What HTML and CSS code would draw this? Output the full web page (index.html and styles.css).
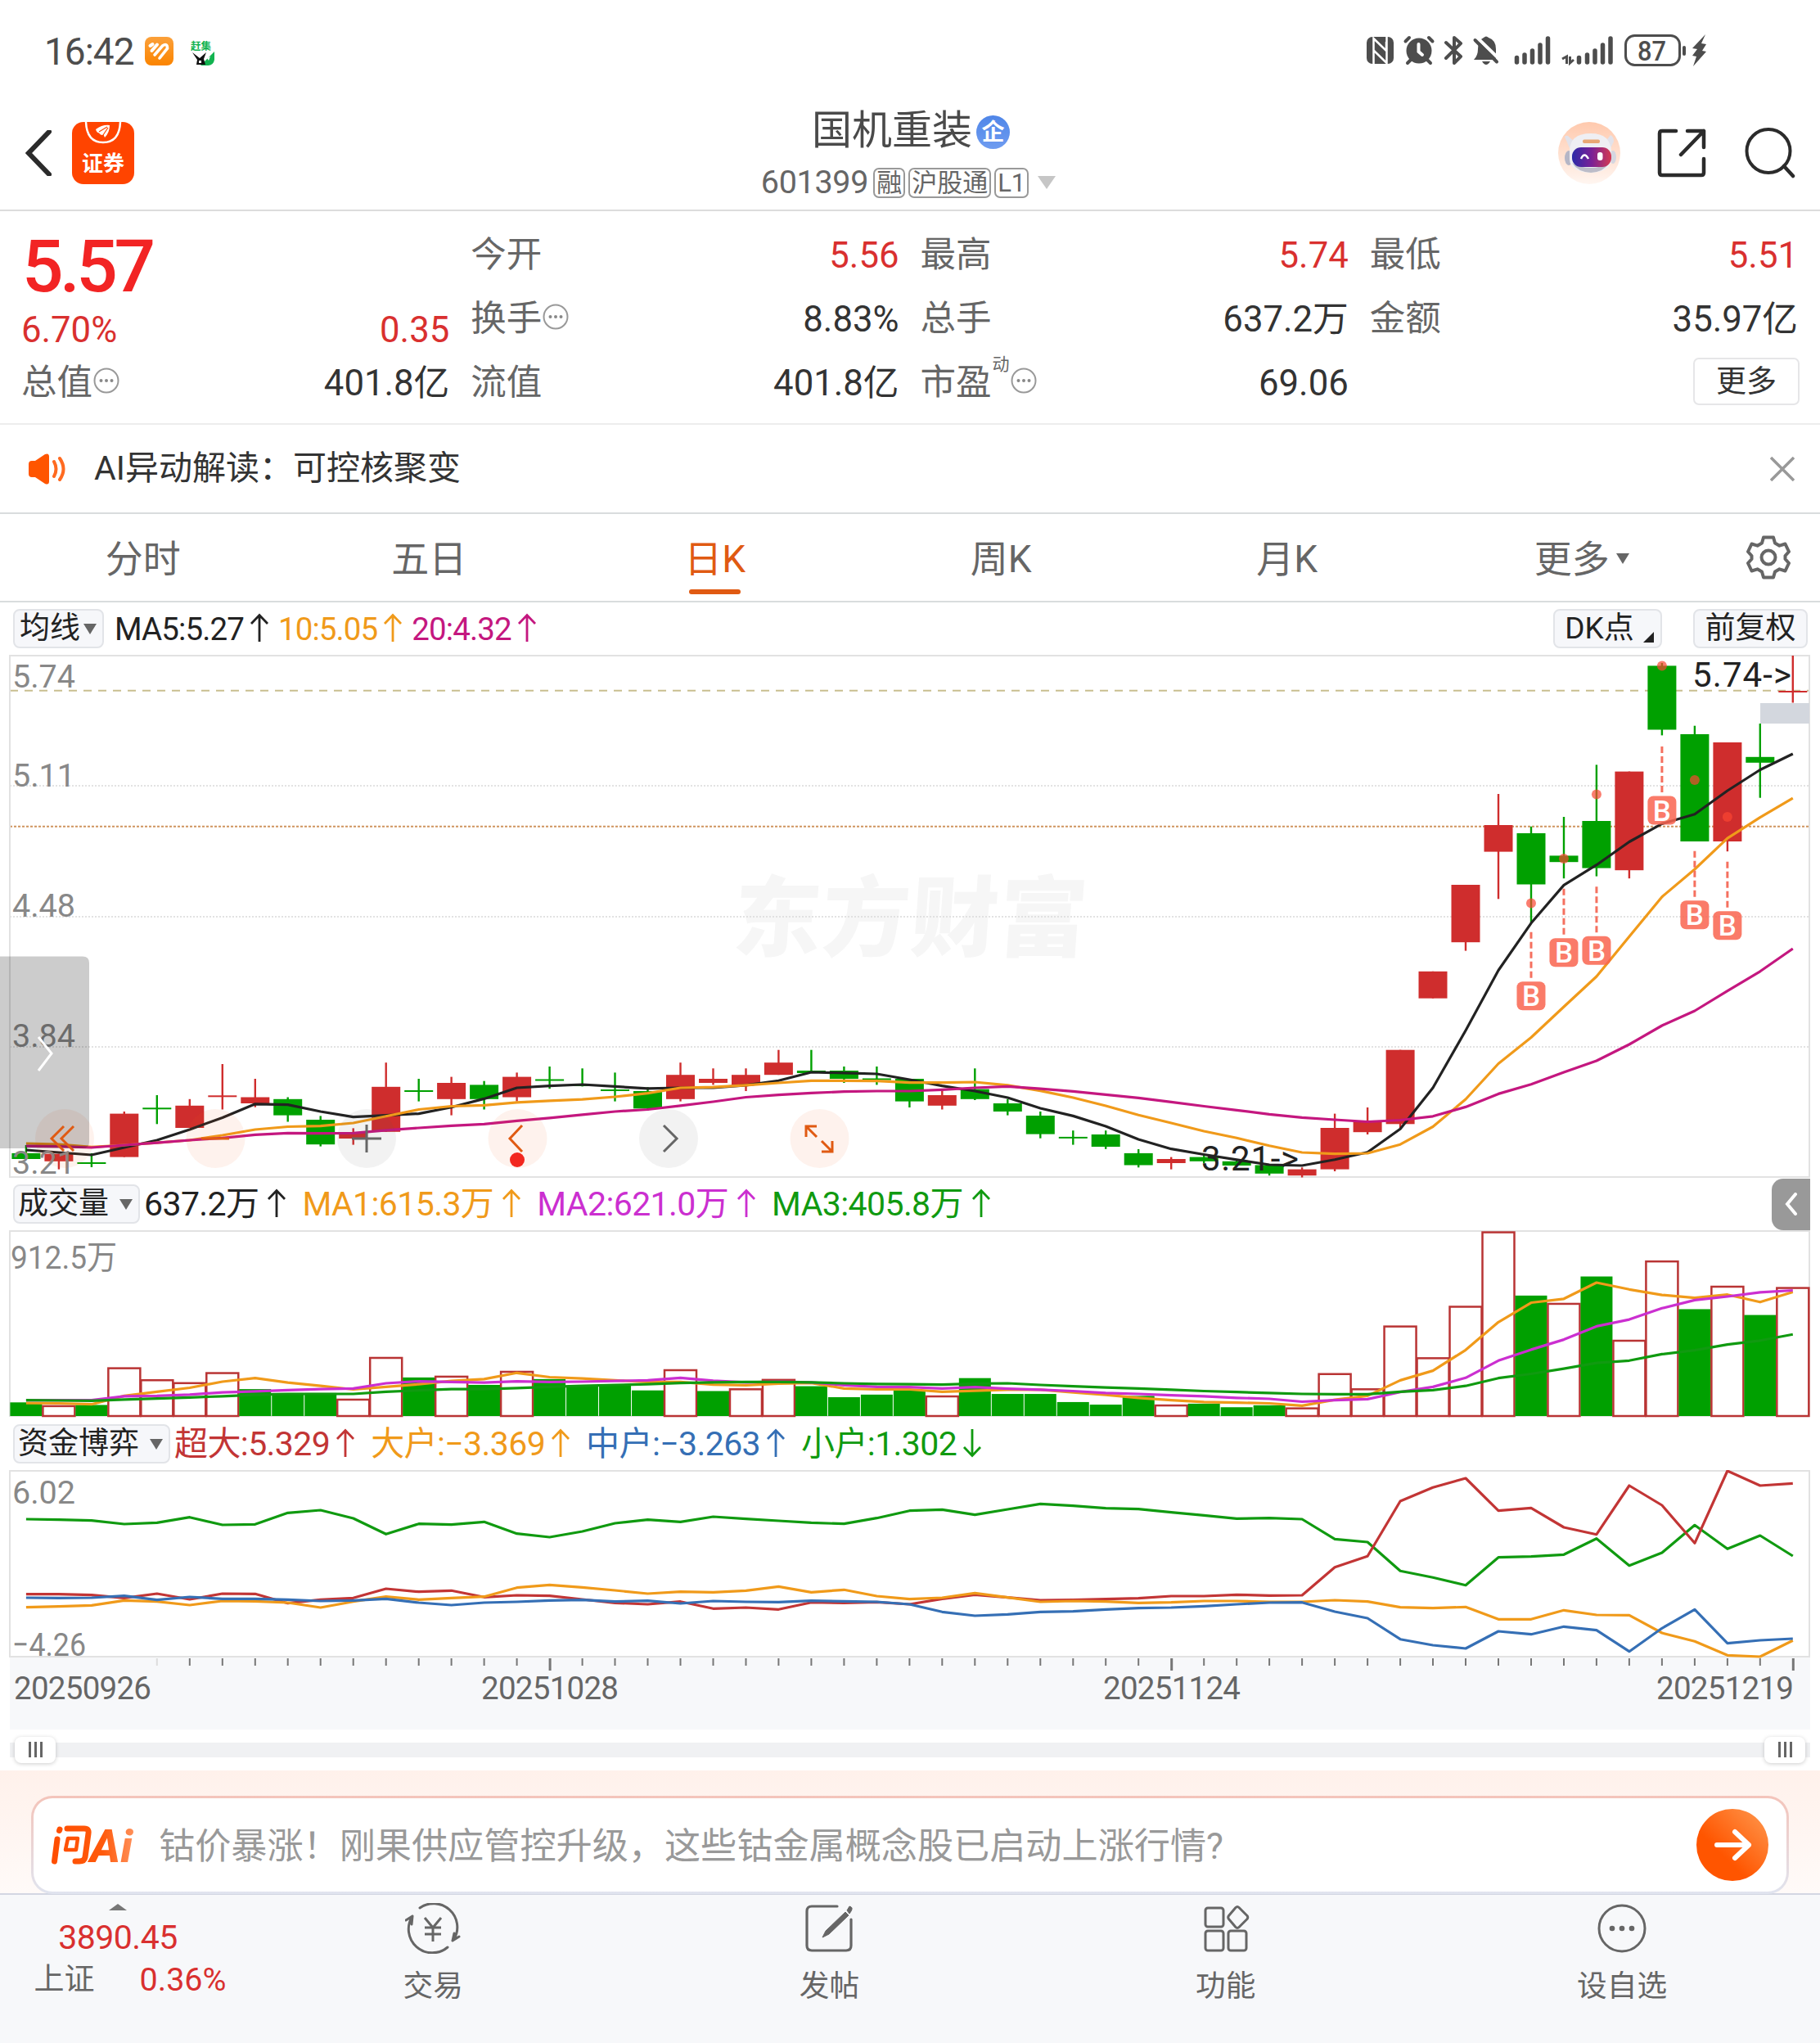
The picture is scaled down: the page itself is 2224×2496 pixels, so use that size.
FILE: index.html
```html
<!DOCTYPE html>
<html lang="zh-CN">
<head>
<meta charset="utf-8">
<title>国机重装 601399</title>
<link rel="stylesheet" href="styles.css">
</head>
<body>
<svg class="defs" width="0" height="0">
  <symbol id="up" viewBox="0 0 24 36"><path d="M12 35V3M2 13L12 2.500L22 13" fill="none" stroke="currentColor" stroke-width="2.800"/></symbol>
  <symbol id="down" viewBox="0 0 24 36"><path d="M12 1V33M2 23L12 33.500L22 23" fill="none" stroke="currentColor" stroke-width="2.800"/></symbol>
  <symbol id="info" viewBox="0 0 32 32"><circle cx="16" cy="16" r="14.500" fill="none" stroke="#999" stroke-width="2"/><g fill="#888"><circle cx="9.500" cy="16" r="2"/><circle cx="16" cy="16" r="2"/><circle cx="22.500" cy="16" r="2"/></g></symbol>
</svg>

<div class="status">
  <div class="status-left">
    <span class="clock">16:42</span>
    <svg class="ic-app" viewBox="0 0 35 35"><defs><linearGradient id="og" x1="0" y1="0" x2="0" y2="1"><stop offset="0" stop-color="#fba03a"/><stop offset="1" stop-color="#fb8400"/></linearGradient></defs><rect width="35" height="35" rx="8" fill="url(#og)"/><g fill="none" stroke="#fff" stroke-linecap="round"><path d="M6.500 11L9.500 9M8.500 17L15 9.500" stroke-width="4"/><path d="M12 22L21.500 11Q27.500 7 27.500 14L18 26" stroke-width="3.600"/></g></svg>
    <svg class="ic-ganji" viewBox="0 0 30 31"><text x="0" y="11.500" font-size="12.500" font-weight="700" fill="#12b350">赶集</text><path d="M29 14V24Q28 31 20 31H12Z" fill="#12b350"/><path d="M2 15L11 22L19 15L16 23L18 30H7L8 24Z" fill="#111"/><path d="M10 25h3v3h-3zM20 22l4-2-2 5z" fill="#fff"/></svg>
  </div>
  <svg class="status-right" viewBox="1666 38 424 46">
    <g fill="#4d4d4d" stroke="none">
      <rect x="1670" y="45" width="33" height="33" rx="7"/>
      <path d="M1678.500 78V47L1694 62V51M1694.500 45V77L1679 62" fill="none" stroke="#fff" stroke-width="2.500"/>
      <path d="M1678.500 46L1694.500 77M1684 62V76" fill="none" stroke="#fff" stroke-width="0"/>
      <circle cx="1734" cy="62" r="15.500"/>
      <path d="M1733.500 54V63L1738 67" fill="none" stroke="#fff" stroke-width="4" stroke-linecap="round"/>
      <path d="M1717.500 50.500L1722 46M1746 46L1750.500 50.500M1720 77L1725 72M1748 77L1743 72" stroke="#4d4d4d" stroke-width="4" stroke-linecap="round"/>
      <path d="M1767 52L1785 69L1777 77V46L1785 53L1767 71" fill="none" stroke="#4d4d4d" stroke-width="4" stroke-linejoin="round" stroke-linecap="round"/>
      <path d="M1801 73Q1806 68 1806 60Q1806 49 1813 46Q1816 43 1819 46Q1828 49 1828 60V73ZM1811 75H1821Q1816 83 1811 75Z"/>
      <path d="M1804 45L1835 75" stroke="#fff" stroke-width="4"/><path d="M1802.500 49L1829 75.500" stroke="#4d4d4d" stroke-width="4" stroke-linecap="round"/>
      <g stroke="#4d4d4d" stroke-width="5.500" stroke-linecap="round"><path d="M1853.500 70.500V76M1863 67V76M1872.500 62V76M1882 55V76M1891.500 47V76"/><path d="M1929.500 70.500V76M1939.500 67V76M1949 62V76M1958.500 55V76M1968 47V76"/></g>
      <path d="M1909 72L1914.500 69V78M1918.500 69V77L1923 73" fill="none" stroke="#4d4d4d" stroke-width="3"/>
      <rect x="1986.500" y="43.500" width="66" height="36" rx="11" fill="none" stroke="#4d4d4d" stroke-width="3"/>
      <rect x="2056" y="56" width="4" height="12" rx="2"/>
      <path d="M2084 42L2068 59L2074 60L2068 68L2073 69L2069 81L2085 63L2080 62L2085 54L2079 53Z"/>
      <text x="2018.500" y="73.500" font-size="33" font-weight="500" text-anchor="middle" textLength="35" lengthAdjust="spacingAndGlyphs">87</text>
    </g>
  </svg>
</div>

<header class="head">
  <div class="head-left">
    <svg class="ic-back" viewBox="0 0 32 56"><path d="M29 2L4 28L29 54" fill="none" stroke="#2b2b2b" stroke-width="6" stroke-linecap="round"/></svg>
    <svg class="ic-sec" viewBox="0 0 76 76"><rect width="76" height="76" rx="14" fill="#ff4400"/><path d="M17 0Q18 25 38 25Q58 25 59 0" fill="none" stroke="#fff" stroke-width="2.500"/><path d="M29 9Q37 3 46 4Q46 13 40 19L38.500 15.500Q35 17 33 13.500Q30 13 29 9Z" fill="#fff"/><path d="M33 12L43 6M38 16L44 7" stroke="#ff4400" stroke-width="1.200"/><text x="38" y="60" font-size="26" text-anchor="middle" class="serif">证券</text></svg>
  </div>
  <div class="head-mid">
    <div class="title"><span>国机重装</span><i class="qi">企</i></div>
    <div class="sub"><span class="code">601399</span><b>融</b><b>沪股通</b><b>L1</b><svg viewBox="0 0 22 16"><path d="M0 0H22L11 16Z" fill="#c6c6c6"/></svg></div>
  </div>
  <div class="head-right">
    <svg class="ic-bot" viewBox="0 0 76 76"><defs><linearGradient id="bg" x1="0" y1="0" x2="0" y2="1"><stop offset="0" stop-color="#ffc9ad"/><stop offset="1" stop-color="#fff6f1"/></linearGradient><linearGradient id="bv"><stop offset="0" stop-color="#2b2aa8"/><stop offset=".5" stop-color="#7a2196"/><stop offset="1" stop-color="#d43a52"/></linearGradient></defs><circle cx="38" cy="38" r="38" fill="url(#bg)"/><path d="M8 18Q11 15 14 19L20 24L14 32ZM64 16Q68 18 68 24L64 32L58 24Z" fill="#e2e2ea"/><ellipse cx="13" cy="44" rx="5" ry="9" fill="#b5b6c6"/><ellipse cx="67" cy="43" rx="4" ry="8" fill="#d5d6e0"/><path d="M14 36Q14 14 40 14Q64 14 65 36V46Q64 61 40 62Q15 61 14 46Z" fill="#efeff3"/><path d="M17 50Q24 61 40 62Q56 61 62 50Q52 56 40 56Q27 56 17 50Z" fill="#bcbcc8"/><rect x="30" y="21.500" width="21" height="4.500" rx="2" fill="#e9a774"/><rect x="17" y="31" width="48" height="24" rx="11" fill="url(#bv)"/><path d="M28 45Q32 36 37 45" fill="none" stroke="#fff" stroke-width="2.500"/><rect x="48" y="37" width="6.500" height="10" rx="3" fill="#fff"/></svg>
    <svg class="ic-share" viewBox="0 0 60 60"><path d="M23 3H6Q3 3 3 6V54Q3 57 6 57H54Q57 57 57 54V37M37 3H57V23M57 3L29 32" fill="none" stroke="#2b2b2b" stroke-width="4.500"  stroke-linecap="round" stroke-linejoin="round"/></svg>
    <svg class="ic-search" viewBox="0 0 62 62"><circle cx="29" cy="28.500" r="26.500" fill="none" stroke="#2b2b2b" stroke-width="4"/><path d="M48 47L59 59" stroke="#2b2b2b" stroke-width="4.500" stroke-linecap="round"/></svg>
  </div>
</header>

<section class="quote">
  <div class="col price">
    <div class="big">5.57</div>
    <div class="chg red"><span>6.70%</span><span>0.35</span></div>
    <div class="row"><label>总值<svg><use href="#info"/></svg></label><span>401.8亿</span></div>
  </div>
  <div class="col">
    <div class="row"><label>今开</label><span class="red">5.56</span></div>
    <div class="row"><label>换手<svg><use href="#info"/></svg></label><span>8.83%</span></div>
    <div class="row"><label>流值</label><span>401.8亿</span></div>
  </div>
  <div class="col">
    <div class="row"><label>最高</label><span class="red">5.74</span></div>
    <div class="row"><label>总手</label><span>637.2万</span></div>
    <div class="row"><label>市盈<sup>动</sup><svg><use href="#info"/></svg></label><span>69.06</span></div>
  </div>
  <div class="col">
    <div class="row"><label>最低</label><span class="red">5.51</span></div>
    <div class="row"><label>金额</label><span>35.97亿</span></div>
    <div class="row end"><button class="more">更多</button></div>
  </div>
</section>

<section class="notice">
  <svg class="ic-spk" viewBox="0 0 46 38"><path d="M0 13Q0 9 4 9H8L20 1Q25 -1 25 4V34Q25 39 20 37L8 29H4Q0 29 0 25Z" fill="#ff5500"/><path d="M31 10Q36 19 31 28M38 6Q47 19 38 32" fill="none" stroke="#ff6a20" stroke-width="4" stroke-linecap="round"/></svg>
  <span>AI异动解读：可控核聚变</span>
  <svg class="ic-x" viewBox="0 0 30 30"><path d="M1 1L29 29M29 1L1 29" stroke="#999" stroke-width="3.500"/></svg>
</section>

<nav class="tabs">
  <span>分时</span><span>五日</span><span class="on">日K</span><span>周K</span><span>月K</span><span class="drop">更多<svg viewBox="0 0 16 13"><path d="M0 0H16L8 13Z" fill="#666"/></svg></span>
  <svg class="ic-gear" viewBox="0 0 54 54"><path d="M21 2.500H33L35 9.500L40.500 12.700L47.500 10.500L52 20L47.500 25V29L52 34L47.500 43.500L40.500 41.300L35 44.500L33 51.500H21L19 44.500L13.500 41.300L6.500 43.500L2 34L6.500 29V25L2 20L6.500 10.500L13.500 12.700L19 9.500Z" fill="none" stroke="#666" stroke-width="4" stroke-linejoin="round"/><circle cx="27" cy="27" r="8.500" fill="none" stroke="#666" stroke-width="4"/></svg>
</nav>

<div class="ind ind-main">
  <button class="pill">均线<i class="tri"></i></button>
  <span class="c-black">MA5:5.27<svg><use href="#up"/></svg></span>
  <span class="c-orange">10:5.05<svg><use href="#up"/></svg></span>
  <span class="c-mag">20:4.32<svg><use href="#up"/></svg></span>
  <div class="ind-right"><button class="pill dk">DK点<i class="corner"></i></button><button class="pill adj">前复权</button></div>
</div>
<svg class="panel" id="kline" viewBox="0 800 2224 639" height="639"></svg>

<div class="ind ind-vol">
  <button class="pill">成交量<i class="tri"></i></button>
  <span class="c-black">637.2万<svg><use href="#up"/></svg></span>
  <span class="c-orange">MA1:615.3万<svg><use href="#up"/></svg></span>
  <span class="c-purple">MA2:621.0万<svg><use href="#up"/></svg></span>
  <span class="c-green">MA3:405.8万<svg><use href="#up"/></svg></span>
  <div class="fold"><svg viewBox="0 0 16 28"><path d="M13 2L3 14L13 26" fill="none" stroke="#fff" stroke-width="4" stroke-linecap="round"/></svg></div>
</div>
<svg class="panel" id="volume" viewBox="0 1503 2224 229" height="229"></svg>

<div class="ind ind-fund">
  <button class="pill">资金博弈<i class="tri"></i></button>
  <span class="c-red">超大:5.329<svg><use href="#up"/></svg></span>
  <span class="c-orange">大户:−3.369<svg><use href="#up"/></svg></span>
  <span class="c-blue">中户:−3.263<svg><use href="#up"/></svg></span>
  <span class="c-green">小户:1.302<svg><use href="#down"/></svg></span>
</div>
<svg class="panel" id="funds" viewBox="0 1796 2224 317" height="317"></svg>

<div class="range"><i></i><i></i></div>

<section class="ai">
  <div class="ask">
    <svg class="ask-logo" viewBox="0 0 104 50"><defs><linearGradient id="ag" gradientUnits="userSpaceOnUse" x1="0" y1="0" x2="104" y2="0"><stop offset="0" stop-color="#ff4d00"/><stop offset=".6" stop-color="#ff5a0c"/><stop offset="1" stop-color="#ff9560"/></linearGradient></defs><g fill="none" stroke="url(#ag)" stroke-width="7" stroke-linecap="round" stroke-linejoin="round"><path d="M10 6L9.500 7.500M7 18L3.500 45M19 5H40Q46 5 45 11L41 40Q40 45 34 45H29"/><path d="M20 17H32L30 31H17Z" stroke-width="4.500"/></g><text x="47" y="46" font-size="56" font-weight="800" font-style="italic" fill="url(#ag)" textLength="52" lengthAdjust="spacingAndGlyphs">Ai</text></svg>
    <span>钴价暴涨！刚果供应管控升级，这些钴金属概念股已启动上涨行情?</span>
    <svg class="ask-go" viewBox="0 0 88 88"><defs><linearGradient id="gg" x1="0.200" y1="0.800" x2="1" y2="0"><stop offset="0.200" stop-color="#ff5500"/><stop offset="1" stop-color="#ff9a50"/></linearGradient></defs><circle cx="44" cy="44" r="44" fill="url(#gg)"/><path d="M25 44H64M47 28L64 44L47 60" fill="none" stroke="#fff" stroke-width="6" stroke-linecap="round" stroke-linejoin="round"/></svg>
  </div>
</section>

<footer class="nav">
  <div class="index">
    <svg viewBox="0 0 22 8"><path d="M0 8L11 0L22 8Z" fill="#777"/></svg>
    <div class="red idx">3890.45</div>
    <div class="idx2"><span>上证</span><span class="red">0.36%</span></div>
  </div>
  <div class="item"><svg viewBox="0 0 68 62"><g fill="none" stroke="#666" stroke-width="3" stroke-linecap="round" stroke-linejoin="round"><path d="M18 6A29 29 0 0 1 60 44M58 46L60 37M58 46L66 41"/><path d="M52 54A29 29 0 0 1 9 16M1 21L9 16L8 26"/><path d="M24 18L34 30L44 18M34 30V47M24 30H44M24 38H44" stroke-linecap="butt"/></g></svg>交易</div>
  <div class="item"><svg viewBox="0 0 68 62"><g fill="none" stroke="#666" stroke-width="3.200" stroke-linecap="round" stroke-linejoin="round"><path d="M44 4H13Q7 4 7 10V52Q7 58 13 58H55Q61 58 61 52V20"/></g><path d="M54 11L58 15L34 38L26 42L30 34ZM56 9L59 4Q64 5 61 10L59 13Z" fill="#666" stroke="#666" stroke-width="1"/></svg>发帖</div>
  <div class="item"><svg viewBox="0 0 68 62"><g fill="none" stroke="#666" stroke-width="3" stroke-linejoin="round"><rect x="9" y="6" width="22" height="23" rx="3"/><rect x="9" y="34" width="22" height="24" rx="3"/><rect x="37" y="34" width="22" height="24" rx="3"/><path d="M46 5.500L37.500 15.500Q36 17.500 37.500 19.500L46 29.500Q48 31.500 50 29.500L60 19.500Q61.500 17.500 60 15.500L50 5.500Q48 3.500 46 5.500Z"/></g></svg>功能</div>
  <div class="item"><svg viewBox="0 0 68 62"><circle cx="34" cy="31" r="28" fill="none" stroke="#666" stroke-width="3"/><g fill="#666"><circle cx="22" cy="31" r="3.300"/><circle cx="34" cy="31" r="3.300"/><circle cx="46" cy="31" r="3.300"/></g></svg>设自选</div>
</footer>
<script src="chart.js"></script>
</body>
</html>
```
FILE: styles.css
```css
* { box-sizing: border-box; }
body { margin: 0; width: 2224px; height: 2496px; background: #fff; color: #333; font-family: Roboto, "Noto Sans CJK SC", sans-serif; line-height: 1.2; overflow: hidden; }
svg { display: block; flex: none; }
.defs { position: absolute; }
i { font-style: normal; }
button { font: inherit; color: inherit; padding: 0; margin: 0; border: 0; background: none; }
.red { color: #d9302f !important; }
svg text { font-family: Roboto, "Noto Sans CJK SC", sans-serif; }
svg .serif { font-family: "Noto Sans CJK SC", sans-serif; font-weight: 700; fill: #fff; }

.status { height: 124px; padding: 0 134px 0 54px; display: flex; justify-content: space-between; align-items: center; }
.status-left { display: flex; align-items: center; }
.clock { font-size: 46px; color: #4d4d4d; width: 123px; letter-spacing: -1px; padding-top: 3px; }
.ic-app { width: 35px; height: 35px; margin-right: 21px; }
.ic-ganji { width: 30px; height: 31px; margin-top: 4px; }
.status-right { width: 424px; height: 46px; margin-top: -2px; }

.head { height: 134px; border-bottom: 2px solid #dcdcdc; display: grid; grid-template-columns: 320px 1fr 320px; }
.head-left { display: flex; align-items: center; gap: 25px; padding-left: 31px; height: 126px; }
.ic-back { width: 32px; height: 56px; }
.ic-sec { width: 76px; height: 76px; }
.head-mid { display: flex; flex-direction: column; align-items: center; }
.title { height: 72px; display: flex; align-items: center; font-size: 49px; line-height: 78px; color: #4a4a4a; padding-left: 2px; }
.qi { width: 41px; height: 41px; border-radius: 50%; margin: 2px 0 0 5px; background: linear-gradient(#4f86e8, #6f9cf0); color: #fff; font-size: 28px; line-height: 41px; font-weight: 700; text-align: center; }
.sub { display: flex; align-items: center; height: 54px; color: #666; padding-right: 4px; }
.code { font-size: 39.500px; letter-spacing: -0.300px; margin-right: 6px; }
.sub b { font-weight: 400; height: 37px; line-height: 33px; font-size: 31px; border: 2px solid #999; border-radius: 7px; padding: 0 2px; margin-right: 4px; }
.sub svg { width: 22px; height: 16px; margin-left: 7px; }
.head-right { display: flex; align-items: center; height: 126px; }
.ic-bot { width: 76px; height: 76px; margin-right: 45px; }
.ic-share { width: 60px; height: 60px; margin-right: 47px; }
.ic-search { width: 62px; height: 62px; }

.quote { height: 261px; padding: 13px 27px 0; display: grid; grid-template-columns: repeat(4, 1fr); column-gap: 27px; border-bottom: 2px solid #ededed; }
.row, .chg { display: flex; justify-content: space-between; align-items: center; height: 78px; font-size: 43.700px; color: #333; white-space: nowrap; }
.row > span, .chg > span { position: relative; top: 2px; }
.row label { display: flex; align-items: center; color: #666; font-size: 43.500px; margin: 5px 0 0 -1px; }
.row label svg { width: 32px; height: 32px; margin-left: 1px; margin-top: -7px; }
.row sup { font-size: 21px; line-height: 22px; align-self: flex-start; margin: -8px 0 0 1px; }
.row.end { justify-content: flex-end; }
.more { width: 130px; height: 58px; border: 2px solid #e6e6e8; border-radius: 7px; font-size: 37px; line-height: 53px; margin-right: -2px; }
.price .big { height: 104px; line-height: 109px; font-size: 89px; font-weight: 500; color: #f22424; letter-spacing: -4.500px; }
.price .chg { height: 52px; }
.price .chg span { margin-left: -1px; }

.notice { height: 109px; border-bottom: 2px solid #d9dcdd; display: flex; align-items: center; padding: 0 31px 0 35px; font-size: 41px; }
.notice span { flex: 1; margin-left: 34px; padding-top: 1px; }
.ic-spk { width: 46px; height: 38px; }
.ic-x { width: 30px; height: 30px; }

.tabs { height: 108px; border-bottom: 2px solid #d9dcdd; display: grid; grid-template-columns: repeat(6, 349.500px) 1fr; justify-items: center; align-items: center; font-size: 46px; color: #666; }
.tabs span { height: 92px; line-height: 105px; margin-top: -9px; }
.tabs span.on { color: #e05a12; position: relative; }
.tabs span.on::after { content: ""; position: absolute; left: 50%; margin-left: -32px; width: 63px; height: 6px; border-radius: 3px; bottom: -3px; background: #e05a12; }
.tabs .drop { display: flex; align-items: flex-start; gap: 8px; margin-left: 21px; }
.tabs .drop svg { width: 16px; height: 13px; margin-top: 45px; }
.ic-gear { width: 54px; height: 54px; }

.ind { display: flex; align-items: center; padding: 0 12px 0 16px; white-space: nowrap; font-size: 41px; letter-spacing: -0.600px; }
.ind span { display: flex; align-items: center; margin-right: 19px; padding-top: 2px; }
.ind span svg { width: 24px; height: 36px; margin-left: 10px; margin-top: -4px; }
.ind-main { height: 64px; font-size: 38.500px; letter-spacing: -0.900px; }
.ind-vol, .ind-fund { height: 64px; }
.ind-fund span svg { margin-left: 7px; }
.pill { height: 48px; padding: 0 7px 0 4px; border: 2px solid #e2e4e8; border-radius: 8px; background: #f6f7fa; font-size: 37px; letter-spacing: 0; line-height: 40px; color: #222; display: flex; align-items: center; margin-right: 4px; }
.ind-vol .pill, .ind-fund .pill { margin-right: 5px; }
.tri { width: 0; height: 0; border: 8px solid transparent; border-top: 13px solid #666; border-bottom: 0; margin-left: 13px; }
.ind-main .tri { margin-left: 4px; }
.ind-main .pill { padding: 0 7px 0 6px; margin-right: 13px; }
.ind-main span { margin-right: 11px; }
.ind-main span svg { margin-left: 7px; }
.ind-right { margin-left: auto; display: flex; gap: 38px; padding-right: 3px; }
.ind-main .ind-right .pill { margin-right: 0; padding: 0; justify-content: center; }
.dk { width: 133px; }
.adj { width: 140px; }
.corner { width: 0; height: 0; border-left: 13px solid transparent; border-bottom: 13px solid #222; margin: 20px -4px 0 11px; }
.fold { margin-left: auto; width: 47px; height: 63px; background: #999; border-radius: 14px 0 0 14px; display: flex; align-items: center; justify-content: center; }
.fold svg { width: 16px; height: 28px; }
.c-black { color: #222; } .c-orange { color: #f09a1a; } .c-mag { color: #c4177f; } .c-purple { color: #cb2fd0; }
.c-green { color: #109a10; } .c-red { color: #c23535; } .c-blue { color: #356fb5; }
.panel { width: 2224px; }
.panel .lbl { fill: #888; font-size: 39.500px; }
.panel .val { fill: #222; font-size: 42px; }
.panel .date { fill: #666; font-size: 38.500px; }
.panel .mark { fill: #f6f6f6; font-size: 107px; font-weight: 900; }

.range { height: 50px; padding: 0 12px; display: flex; align-items: center; justify-content: space-between; background: linear-gradient(#f0f1f3, #f0f1f3) 12px 16px / 2200px 18px no-repeat; }
.range i { width: 50px; height: 32px; margin: 0 6px; border-radius: 8px; box-shadow: 0 1px 5px #0003; background: linear-gradient(90deg, #666 2.500px, transparent 2.500px 7px, #666 7px 9.500px, transparent 9.500px 14px, #666 14px 16.500px, transparent 16.500px) 17px 6px / 18px 19px no-repeat #fff; }

.ai { height: 152px; padding: 31px 38px 0; background: linear-gradient(#fff1eb, #fffaf8); border-bottom: 2px solid #d3d6e2; }
.ask { height: 120px; border: 3px solid transparent; border-radius: 26px; background: linear-gradient(#fff, #fff) padding-box, linear-gradient(#f4c4ba, #e0e4ef) border-box; display: flex; align-items: center; padding: 0 22px; }
.ask span { flex: 1; margin-left: 27px; font-size: 44.150px; color: #999; white-space: nowrap; padding-top: 4px; }
.ask-logo { width: 104px; height: 50px; overflow: visible; }
.ask-go { width: 88px; height: 88px; }

.nav { height: 181px; background: #f7f8fa; display: grid; grid-template-columns: 287px repeat(4, 484.300px); color: #666; font-size: 36.700px; }
.item { display: flex; flex-direction: column; align-items: center; padding-top: 10px; line-height: 50px; gap: 15px; }
.item svg { width: 68px; height: 62px; }
.index { display: flex; flex-direction: column; align-items: center; padding: 11px 0 0 1px; }
.index svg { width: 22px; height: 8px; }
.idx { font-size: 41px; line-height: 50px; margin-top: 8px; letter-spacing: -0.500px; }
.idx2 { display: flex; gap: 55px; line-height: 54px; font-size: 37px; margin-left: 30px; }
.idx2 .red { font-size: 39.500px; }
```
FILE: chart.js
```js
const STEP = 39.98;
const X = i => 31.9 + STEP * i;
const RED = '#cf2d2d', GREEN = '#00a000';

function line(values, map, color, width = 3.2) {
  const pts = values.map((v, i) => X(i).toFixed(1) + ',' + map(v).toFixed(1)).join(' ');
  return `<polyline points="${pts}" fill="none" stroke="${color}" stroke-width="${width}" stroke-linejoin="round"/>`;
}
const same = v => v;
const rect = (x, y, w, h, extra) => `<rect x="${x}" y="${y}" width="${w}" height="${h}" ${extra}/>`;
const frame = (y, h) => rect(12, y, 2199, h, 'fill="none" stroke="#e2e2e2" stroke-width="2"');
const label = (x, mid, text, cls = 'lbl', extra = '') => `<text x="${x}" y="${mid + 14}" class="${cls}" ${extra}>${text}</text>`;

/* colour, high, body top, body bottom, low */
const candles = [
['g',1399,1408.9,1416,1416],['r',1409.7,1409.7,1418.8,1428.6],['g',1408.9,1420,1422,1426],['r',1358,1360.6,1413.6,1413.6],['g',1338,1353.3,1355.3,1373.3],
['r',1342.8,1350.8,1378,1378],['r',1300,1338.3,1340.3,1355.5],['r',1318,1340.5,1348,1352.7],['g',1340.5,1342.8,1362.6,1370.5],['g',1363.4,1368,1398.2,1400.6],
['r',1378.4,1383.6,1391,1398.6],['r',1298.2,1327.8,1382.8,1382.8],['g',1318,1332,1334,1345.6],['r',1315.6,1323,1342.8,1362.6],['g',1320.7,1325.4,1342.8,1355.5],
['r',1310.4,1315.6,1340.5,1345.6],['g',1303,1318.5,1320.5,1330.2],['g',1305.3,1325,1327,1327.4],['g',1310.4,1331,1333,1345.6],['g',1328.2,1333,1354.3,1356.7],
['r',1298.2,1313.2,1342.8,1345.6],['r',1305.3,1318,1323,1325.4],['r',1305.3,1313.2,1325.4,1333],['r',1282.7,1298.2,1313.2,1313.2],['g',1282.7,1308,1311,1311],
['g',1303,1308,1318,1323],['g',1303,1317.5,1319.5,1325.4],['g',1318,1318,1345.6,1353],['r',1331.8,1338,1350.8,1355.5],['g',1305.3,1330.6,1342.8,1344],
['g',1342.8,1348,1358,1362.6],['g',1358,1363,1385.6,1390.7],['g',1381.2,1388.9,1390.9,1398.6],['g',1381.2,1386,1401,1403.8],['g',1404,1408.9,1423.5,1426.3],
['r',1413.6,1416,1421,1428.6],['g',1411.3,1413.6,1418.8,1421],['g',1416,1418.8,1424,1424],['g',1423.5,1423.5,1433.8,1436.2],['r',1426.3,1428.6,1436.2,1438.5],
['r',1360.6,1378,1428.6,1431],['r',1353,1370,1383.2,1386],['r',1282.7,1282.7,1373.3,1378],['r',1186.8,1186.8,1219.7,1219.7],['r',1081,1081,1151.2,1161.6],
['r',970,1008,1040.6,1098.3],['g',1009.8,1018,1080.5,1127],['g',998,1045.4,1053.2,1073.2],['g',934.4,1003,1060.6,1070.6],['r',942.6,942.6,1063.2,1073.2],
['g',810,813.4,891.5,898.4],['g',886.7,897,1028,1028],['r',907,907,1028,1040.2],['g',884,924.8,931.8,974.7],['r',801,844,846,858.5]];

const ma5 = [1405,1408,1411,1402,1393,1380,1365.4,1348.8,1349.6,1358,1364.6,1362.6,1360.6,1352.7,1342.4,1329,1326.6,1325,1327.4,1329.8,1329,1329,1325.8,1320.3,1310,1310.8,1312,1319,1326.6,1333,1341,1354,1363.4,1376,1392,1403.7,1410.5,1416.8,1423,1424,1416.8,1407.7,1379.2,1329,1259,1185.5,1127.8,1081.4,1056.7,1028.5,1006.4,994.7,966,940.5,921];
const ma10 = [1397,1398.2,1401.4,1399,1396.2,1393,1387,1380,1376.5,1375.7,1372,1363.8,1355.5,1351.5,1350.4,1346.8,1344.8,1343.2,1340,1335.7,1329,1328.2,1325.8,1323,1320.3,1320.3,1320.7,1322.7,1322.7,1322,1325.8,1332.6,1341,1351,1362.2,1372,1382,1390.3,1399.8,1408,1409.7,1409,1398.2,1376.5,1343,1299.5,1267.5,1230,1193,1144.3,1095.7,1062,1024.2,998.6,975.2];
const ma20 = [1400.2,1400.6,1402,1399,1396.2,1393,1390.3,1386.3,1384.4,1384.7,1384.4,1380.8,1378,1375.3,1373.3,1369.3,1365.8,1361.8,1358,1355.5,1350.8,1346,1340.5,1337.7,1335.3,1333.7,1333,1333,1331.4,1329,1327.4,1330.2,1333.3,1337.3,1341.3,1346.4,1351.5,1356.3,1361.4,1365.4,1368,1370.5,1368.5,1363.8,1352.4,1336.4,1324.7,1310,1296,1276,1253,1235,1210.6,1186.8,1159];

let k = '<text x="896" y="1160" class="mark" textLength="432" transform="skewX(-4) translate(79 0)">东方财富</text>';
[960, 1120, 1279].forEach(y => k += `<path d="M12 ${y}H2211" stroke="#d9d9d9" stroke-width="1.500" stroke-dasharray="2 2"/>`);
k += '<path d="M12 843.700H2211" stroke="#c9bf90" stroke-width="2" stroke-dasharray="10 8"/>';
k += '<path d="M12 1009.800H2211" stroke="#cf9560" stroke-width="2" stroke-dasharray="3 2"/>';
k += frame(801, 637);
candles.forEach(([c, hi, top, bot, lo], i) => {
  const col = c === 'r' ? RED : GREEN;
  k += rect((X(i) - 1.2).toFixed(1), hi, 2.4, Math.max(lo - hi, 1), `fill="${col}"`) + rect((X(i) - 17.500).toFixed(1), top, 35, Math.max(bot - top, 2), `fill="${col}"`);
});
k += rect(2151, 859, 60, 25, 'fill="#d3d7de"');
k += line(ma5, same, '#222') + line(ma10, same, '#f09a1a') + line(ma20, same, '#c4177f');
[[46,1103.5],[47,1049],[48,970.4],[50,813.4],[51,953],[52,998]].forEach(([i, y]) => k += `<circle cx="${X(i)}" cy="${y}" r="6" fill="#fa4632" opacity=".7"/>`);
[[46,1216.7],[47,1163.8],[48,1161.2],[50,990],[51,1117.8],[52,1130.8]].forEach(([i, y]) => {
  k += `<path d="M${X(i)} ${y - 78}V${y - 18}" stroke="#f5705f" stroke-width="3" stroke-dasharray="8 4"/>`;
  k += `<g opacity=".85">${rect(X(i) - 17.500, y - 17.500, 35, 35, 'rx="7" fill="#fa6450"')}<text x="${X(i)}" y="${y + 12.500}" font-size="35" font-weight="500" text-anchor="middle" fill="#fff">B</text></g>`;
});
k += label(15, 826, '5.74') + label(15, 947, '5.11') + label(15, 1106, '4.48') + label(15, 1265, '3.84') + label(15, 1420, '3.21');
k += label(2068, 825, '5.74-&gt;', 'val', 'textLength="121"') + label(1468, 1416, '3.21-&gt;', 'val', 'textLength="119"');
['#f05a14', '#f05a14', '#555', '#f05a14', '#555', '#f05a14'].forEach((c, n) => k += `<circle cx="${79 + n * 184.5}" cy="1391" r="36" fill="${c}" opacity=".08"/>`);
k += '<path d="M0 1168.500H101Q109 1168.500 109 1176.500V1395Q109 1403 101 1403H0Z" fill="#000" opacity=".2"/>';
k += '<path d="M47 1267L63 1287L47 1308" fill="none" stroke="#fff" stroke-width="3"/>';
k += '<g fill="none" stroke="#e05a12" stroke-width="3"><path d="M78 1376L63 1391L78 1406M90 1376L75 1391L90 1406"/><path d="M246 1391H280"/><path d="M638 1375L623 1391L638 1407"/><path d="M998 1376H985V1389M985 1376L998 1389M1004 1407H1017V1394M1017 1407L1004 1394"/></g>';
k += '<path d="M430 1391H466M448 1374V1408M811 1375L827 1391L811 1407" fill="none" stroke="#666" stroke-width="3"/>';
k += '<circle cx="632" cy="1417" r="9" fill="#f2271f"/>';
document.getElementById('kline').innerHTML = k;

/* volume: bar heights out of 571, averages on the same scale */
const vol = [43,34,35,151,114,105,136,84,72,72,54,183,120,125,97,140,115,93,95,80,145,78,86,115,93,59,67,81,64,118,69,69,44,36,63,36,39,28,34,27,133,86,280,182,341,571,373,350,432,236,481,331,403,313,399];
const volUp = 'grgrrrrgggrrgrgrggggrgrrgggg' + 'rgggggg' + 'rgggrrrrrrrgrgrrgrgr';
const V = y => 1140 + y * 0.3954;
const v1 = [1452,1453,1456,1430,1417,1405,1386,1375,1389,1399,1410,1402,1394,1384,1378,1359,1372,1376,1382,1387,1387,1395,1397,1392,1390,1407,1410,1410,1417,1414,1411,1411,1419,1427,1436,1443,1449,1451,1453,1460,1442,1430,1382,1352,1288,1202,1142,1130,1080,1101,1118,1127,1117,1140,1109];
const v2 = [1443,1443,1443,1431,1430,1426,1419,1416,1412,1409,1407,1391,1385,1387,1389,1385,1387,1386,1384,1382,1374,1383,1388,1386,1388,1397,1402,1403,1407,1403,1408,1411,1415,1421,1424,1428,1431,1436,1439,1448,1443,1440,1418,1402,1374,1321,1287,1256,1215,1194,1159,1134,1123,1110,1104];
const v3 = [1443,1444,1445,1441,1438,1435,1431,1427,1424,1424,1424,1417,1413,1409,1409,1406,1402,1399,1396,1394,1390,1388,1387,1387,1388,1391,1393,1394,1395,1392,1391,1396,1400,1404,1407,1411,1415,1418,1421,1424,1425,1425,1417,1412,1399,1375,1362,1346,1328,1321,1301,1289,1271,1259,1240];
let v = frame(1504, 226);
vol.forEach((n, i) => {
  const top = V(1493 - n), h = 1730 - top;
  v += volUp[i] === 'g' ? rect(X(i) - 19.5, top, 39, h, `fill="${GREEN}"`) : rect(X(i) - 19.5, top + 1, 39, h - 1, 'fill="#fff" stroke="#b93434" stroke-width="2.500"');
});
v += line(v1, V, '#f09a1a') + line(v2, V, '#cb2fd0') + line(v3, V, '#109a10') + label(13, 1536, '912.5万', 'lbl', 'textLength="130" lengthAdjust="spacingAndGlyphs"');
document.getElementById('volume').innerHTML = v;

/* money flow lines and the date axis */
const F = y => 1740 + y / 3;
const small = [348,350,353,366,361,341,369,367,325,315,345,403,365,368,358,401,414,393,363,350,358,339,347,354,361,365,344,317,313,332,312,292,299,308,311,323,334,346,344,348,421,432,538,562,590,488,485,478,419,518,471,370,457,408,483];
const huge = [623,623,626,637,621,642,621,622,656,643,637,603,614,610,634,627,629,642,655,660,650,676,672,679,653,655,652,660,640,625,635,645,644,641,638,630,630,625,628,627,524,484,282,232,198,317,307,378,404,225,297,436,171,225,217];
const large = [671,668,664,646,650,663,648,649,654,672,650,632,643,637,632,599,589,598,609,621,614,616,610,595,616,607,630,641,636,619,635,651,648,650,655,653,648,648,651,651,645,650,671,674,670,715,715,682,699,700,765,796,847,852,793];
const mid = [636,637,636,629,644,633,640,640,643,648,646,640,654,663,654,651,646,644,650,647,657,648,651,652,647,649,651,660,688,702,697,688,686,679,674,672,667,660,654,653,687,711,788,810,822,759,770,742,755,833,748,679,803,792,786];
let f = rect(12, 2024, 2200, 89, 'fill="#f7f8fa"') + frame(1797, 227);
f += line(small, F, '#109a10') + line(huge, F, '#c23535') + line(large, F, '#f09a1a') + line(mid, F, '#356fb5');
for (let i = 4; i < 55; i++) {
  const big = i === 16 || i === 35 || i === 54;
  f += rect((X(i) - 1).toFixed(1), 2026, big ? 3 : 2, big ? 15 : 9, `fill="${i === 4 ? '#ddd' : '#777'}"`);
}
f += label(15, 1823, '6.02') + label(15, 2009, '−4.26', 'lbl', 'textLength="90" lengthAdjust="spacingAndGlyphs"');
f += label(17, 2062, '20250926', 'date', 'textLength="168"') + label(588, 2062, '20251028', 'date', 'textLength="168"') + label(1348, 2062, '20251124', 'date', 'textLength="168"') + label(2024, 2062, '20251219', 'date', 'textLength="168"');
document.getElementById('funds').innerHTML = f;
```
